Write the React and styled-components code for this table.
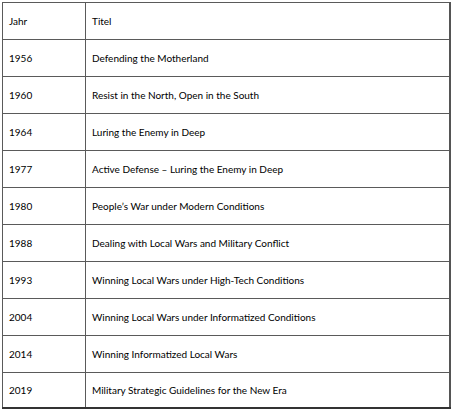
import React from "react";
import styled, { createGlobalStyle } from "styled-components";

const Global = createGlobalStyle`
  html, body { margin: 0; padding: 0; background: #fff; }
  body { font-family: Lato, "Liberation Sans", sans-serif; color: #000; }
`;

const Wrap = styled.div`
  padding: 2px 0 0 2px;
`;

const Table = styled.table`
  border-collapse: collapse;
  width: 449px;
  table-layout: fixed;
  border-right: 2px solid #555;
  border-bottom: 2px solid #333;
`;

const Row = styled.tr`
  height: ${(p) => (p.$last ? "35px" : "37px")};
`;

const Cell = styled.td`
  border: 1px solid #5a5a5a;
  padding: 0 0 0 6px;
  font-size: 10px;
  line-height: 12px;
  vertical-align: middle;
  width: ${(p) => (p.$narrow ? "76px" : "auto")};
  white-space: nowrap;
`;

const rows = [
  ["Jahr", "Titel"],
  ["1956", "Defending the Motherland"],
  ["1960", "Resist in the North, Open in the South"],
  ["1964", "Luring the Enemy in Deep"],
  ["1977", "Active Defense – Luring the Enemy in Deep"],
  ["1980", "People’s War under Modern Conditions"],
  ["1988", "Dealing with Local Wars and Military Conflict"],
  ["1993", "Winning Local Wars under High-Tech Conditions"],
  ["2004", "Winning Local Wars under Informatized Conditions"],
  ["2014", "Winning Informatized Local Wars"],
  ["2019", "Military Strategic Guidelines for the New Era"],
];

export default function App() {
  return (
    <Wrap>
      <Global />
      <Table>
        <tbody>
          {rows.map(([y, t], i) => (
            <Row key={y} $last={i === rows.length - 1}>
              <Cell $narrow>{y}</Cell>
              <Cell>{t}</Cell>
            </Row>
          ))}
        </tbody>
      </Table>
    </Wrap>
  );
}
